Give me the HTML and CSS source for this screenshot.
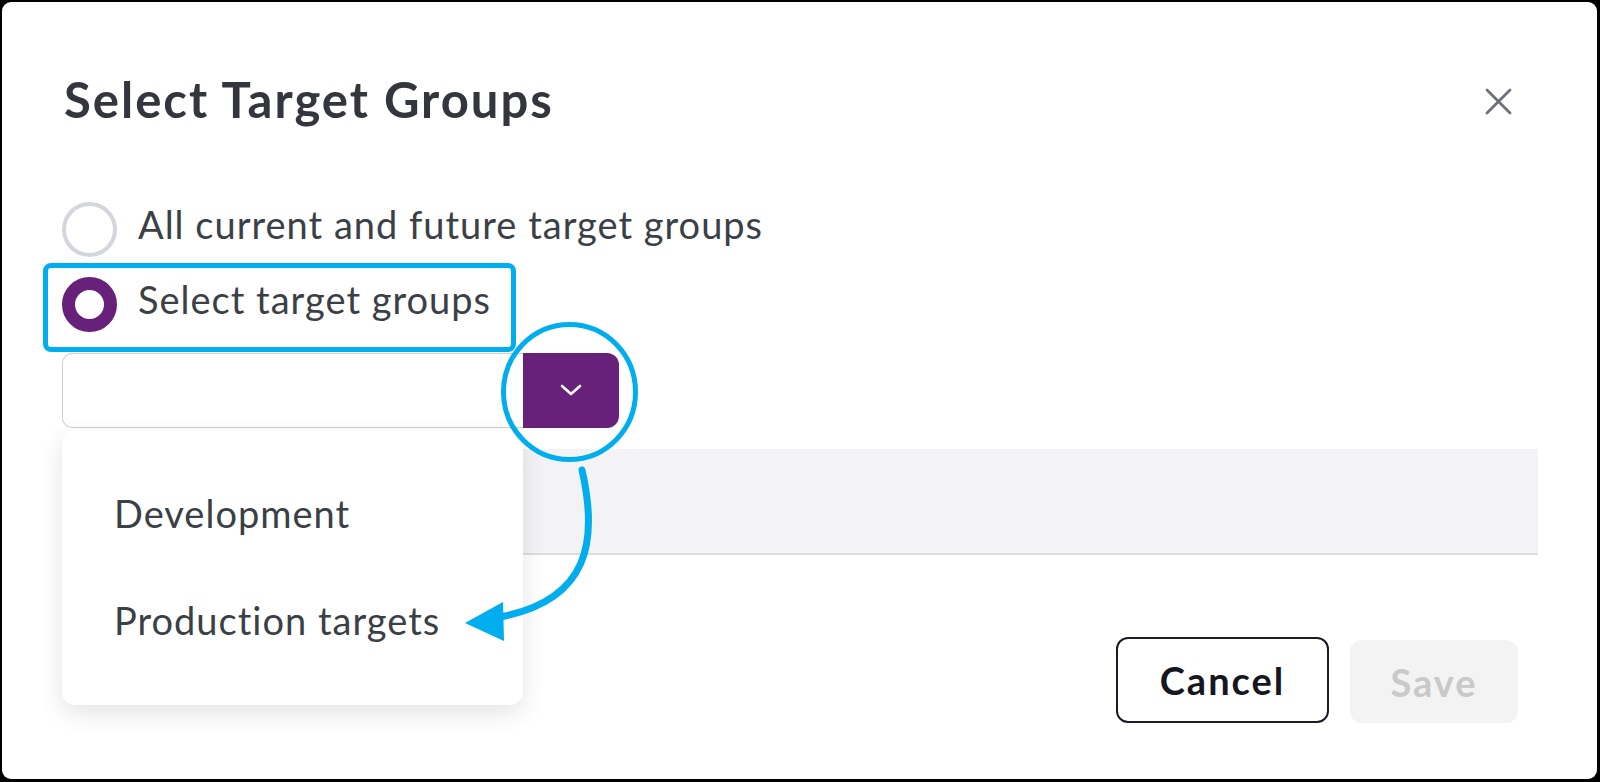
FILE: index.html
```html
<!DOCTYPE html>
<html>
<head>
<meta charset="utf-8">
<link rel="stylesheet" href="styles.css">
</head>
<body>
<div class="frame">
  <div class="panel">
    <div class="header">
      <h1 class="title">Select Target Groups</h1>
      <button class="close" aria-label="Close">
        <svg width="27" height="27" viewBox="0 0 27 27"><path d="M2 2 L25 25 M25 2 L2 25" stroke="#6b7079" stroke-width="2.8" stroke-linecap="round"/></svg>
      </button>
    </div>
    <div class="options">
      <label class="option">
        <span class="radio"></span>
        <span class="label">All current and future target groups</span>
      </label>
      <label class="option selected">
        <span class="radio on"></span>
        <span class="label">Select target groups</span>
      </label>
    </div>
    <div class="picker">
      <div class="select">
        <div class="field"></div>
        <div class="toggle">
          <svg width="22" height="12" viewBox="0 0 22 12"><path d="M2 2 L11 10 L20 2" fill="none" stroke="#fff" stroke-width="2.6" stroke-linecap="round" stroke-linejoin="round"/></svg>
        </div>
      </div>
      <div class="menu">
        <div class="item">Development</div>
        <div class="item">Production targets</div>
      </div>
    </div>
    <div class="table"></div>
    <div class="footer">
      <button class="btn cancel">Cancel</button>
      <button class="btn save" disabled>Save</button>
    </div>
  </div>
  <svg class="annot" width="1600" height="782" viewBox="0 0 1600 782">
    <ellipse cx="569.5" cy="392" rx="66" ry="67.5" fill="none" stroke="#00adef" stroke-width="5"/>
    <path d="M582 470 C 598 540, 590 600, 500 617" fill="none" stroke="#00adef" stroke-width="7" stroke-linecap="round"/>
    <polygon points="465,623 503,602 504,641" fill="#00adef"/>
  </svg>
</div>
</body>
</html>
```
FILE: styles.css
```css
* { box-sizing: border-box; }
html, body { margin: 0; padding: 0; }
body {
  background: #000;
  width: 1600px;
  height: 782px;
  overflow: hidden;
  font-family: "Lato", "Liberation Sans", sans-serif;
}
.frame {
  position: relative;
  width: 1600px;
  height: 782px;
  padding: 2px 3px 3px 2px;
}
.panel {
  position: relative;
  background: #fff;
  width: 1595px;
  height: 777px;
  border-radius: 9px;
  padding: 0 59px 0 60px;
  display: flex;
  flex-direction: column;
}
.header {
  display: flex;
  justify-content: space-between;
  align-items: center;
  height: 60px;
  margin-top: 67px;
}
.title {
  margin: 0 0 0 2px;
  font-size: 49px;
  line-height: 60px;
  font-weight: 700;
  color: #33363c;
  letter-spacing: 2px;
}
.close {
  border: 0;
  background: none;
  padding: 0;
  width: 27px;
  height: 27px;
  margin-right: 26px;
  margin-top: 4px;
}
.close svg { display: block; }
.options {
  display: flex;
  flex-direction: column;
  gap: 20.5px;
  margin-top: 72.5px;
}
.option {
  position: relative;
  display: flex;
  align-items: center;
  gap: 21px;
  height: 55px;
}
.option.selected::after {
  content: "";
  position: absolute;
  left: -19px;
  top: -14px;
  width: 463px;
  height: 79px;
  border: 5px solid #00adef;
  border-radius: 8px;
}
.radio {
  width: 55px;
  height: 55px;
  border-radius: 50%;
  border: 4.5px solid #d3d6dc;
  background: #fff;
  flex: none;
}
.radio.on {
  border: 13.5px solid #68217a;
}
.label {
  font-size: 38px;
  color: #3b3f46;
  letter-spacing: 1px;
  margin-bottom: 11px;
}
.picker {
  position: relative;
  margin-top: 20.5px;
  z-index: 2;
}
.select {
  display: flex;
  height: 75.5px;
}
.field {
  width: 461px;
  border: 1.5px solid #cdcfd4;
  border-right: 0;
  border-radius: 10px 0 0 10px;
  background: #fff;
}
.toggle {
  width: 96px;
  background: #68217a;
  border-radius: 0 12px 12px 0;
  display: flex;
  align-items: center;
  justify-content: center;
}
.toggle svg { display: block; }
.menu {
  position: absolute;
  left: 0;
  top: 77.5px;
  width: 461px;
  height: 275px;
  background: #fff;
  border-radius: 13px;
  box-shadow: 0 8px 24px rgba(0, 0, 0, 0.11);
  padding: 53px 0 0 52px;
  display: flex;
  flex-direction: column;
  gap: 47px;
}
.item {
  font-size: 38px;
  color: #3b3f46;
  letter-spacing: 1px;
  line-height: 60px;
  height: 60px;
}
.table {
  margin-top: 21px;
  height: 106px;
  background: #f3f3f5;
  border-bottom: 2px solid #dcdcdf;
}
.footer {
  display: flex;
  justify-content: flex-end;
  align-items: flex-end;
  gap: 21px;
  margin-top: 82px;
  padding-right: 20px;
}
.btn {
  font-family: "Lato", "Liberation Sans", sans-serif;
  font-weight: 700;
  font-size: 38px;
  letter-spacing: 2px;
  border-radius: 12px;
  padding: 0;
}
.cancel {
  width: 213px;
  height: 86px;
  background: #fff;
  border: 2px solid #1c1c28;
  color: #16161f;
}
.save {
  width: 168px;
  height: 83px;
  background: #f3f3f3;
  border: 0;
  color: #c9c9c9;
}
.annot {
  position: absolute;
  left: 0;
  top: 0;
  pointer-events: none;
  z-index: 5;
}
```
